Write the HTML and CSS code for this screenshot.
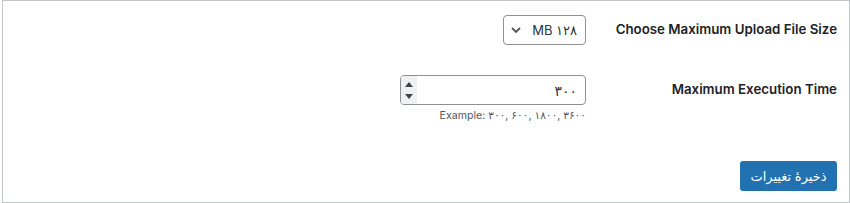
FILE: index.html
```html
<!DOCTYPE html>
<html lang="fa" dir="rtl">
<head>
    <meta charset="UTF-8">
    <title>Settings</title>
    <link rel="stylesheet" href="styles.css">
</head>
<body>
    <div class="panel">
        <div class="form-row">
            <label class="row-label">Choose Maximum Upload File Size</label>
            <div class="row-field">
                <div class="select-box">
                    <span class="select-text">۱۲۸ MB</span>
                    <svg class="chevron" width="12" height="8" viewBox="0 0 12 8">
                        <path d="M2 2 L6 6 L10 2" fill="none" stroke="#50575e" stroke-width="1.8"/>
                    </svg>
                </div>
            </div>
        </div>

        <div class="form-row">
            <label class="row-label">Maximum Execution Time</label>
            <div class="row-field">
                <div class="number-box">
                    <input class="number-input" type="text" value="۳۰۰">
                    <div class="spinner">
                        <svg width="8" height="6" viewBox="0 0 8 6"><path d="M0 5 L4 0 L8 5 Z" fill="#3c434a"/></svg>
                        <svg width="8" height="6" viewBox="0 0 8 6"><path d="M0 1 L4 6 L8 1 Z" fill="#3c434a"/></svg>
                    </div>
                </div>
                <p class="description" dir="ltr">Example: ۳۰۰, ۶۰۰, ۱۸۰۰, ۳۶۰۰</p>
            </div>
        </div>

        <div class="actions">
            <button class="save-btn">ذخیرهٔ تغییرات</button>
        </div>
    </div>
</body>
</html>
```

FILE: styles.css
```css
/* Page */
html, body {
    margin: 0;
    padding: 0;
    background: #fff;
    font-family: 'Inter', 'DejaVu Sans', sans-serif;
    color: #1d2327;
}

.panel {
    width: 848px;
    height: 203px;
    box-sizing: border-box;
    border: 1px solid #c3c4c7;
    padding: 14px 12px 0 0;
}

/* Rows */
.form-row {
    display: grid;
    grid-template-columns: 231px auto;
    column-gap: 20px;
    margin-bottom: 30px;
}

.form-row + .form-row {
    margin-bottom: 0;
}

.row-label {
    font-size: 13.3px;
    font-weight: 600;
    line-height: 28px;
    white-space: nowrap;
    text-align: right;
}

.row-field {
    display: flex;
    flex-direction: column;
    align-items: flex-start;
}

/* Select */
.select-box {
    width: 83px;
    height: 30px;
    box-sizing: border-box;
    border: 1px solid #8c8f94;
    border-radius: 4px;
    display: flex;
    align-items: center;
    justify-content: space-between;
    padding: 0 8px 0 6px;
}

.select-text {
    font-size: 13px;
    color: #2c3338;
}

.chevron {
    display: block;
}

/* Number input */
.number-box {
    width: 186px;
    height: 30px;
    box-sizing: border-box;
    border: 1px solid #8c8f94;
    border-radius: 4px;
    display: flex;
    align-items: stretch;
    overflow: hidden;
}

.number-input {
    flex: 1;
    min-width: 0;
    border: none;
    outline: none;
    background: transparent;
    font-family: inherit;
    font-size: 14px;
    color: #2c3338;
    text-align: right;
    padding: 0 8px;
}

.spinner {
    width: 16px;
    margin: 0 5px 0 0;
    background: #f0f0f1;
    display: flex;
    flex-direction: column;
    align-items: center;
    justify-content: center;
    gap: 5px;
}

.spinner svg {
    display: block;
}

.description {
    margin: 4px 0 0;
    font-size: 10.6px;
    line-height: 14px;
    color: #50575e;
}

/* Save button */
.actions {
    margin-top: 38px;
}

.save-btn {
    width: 97px;
    height: 30px;
    border: none;
    border-radius: 3px;
    background: #2271b1;
    color: #fff;
    font-family: inherit;
    font-size: 13px;
    cursor: pointer;
}
```
